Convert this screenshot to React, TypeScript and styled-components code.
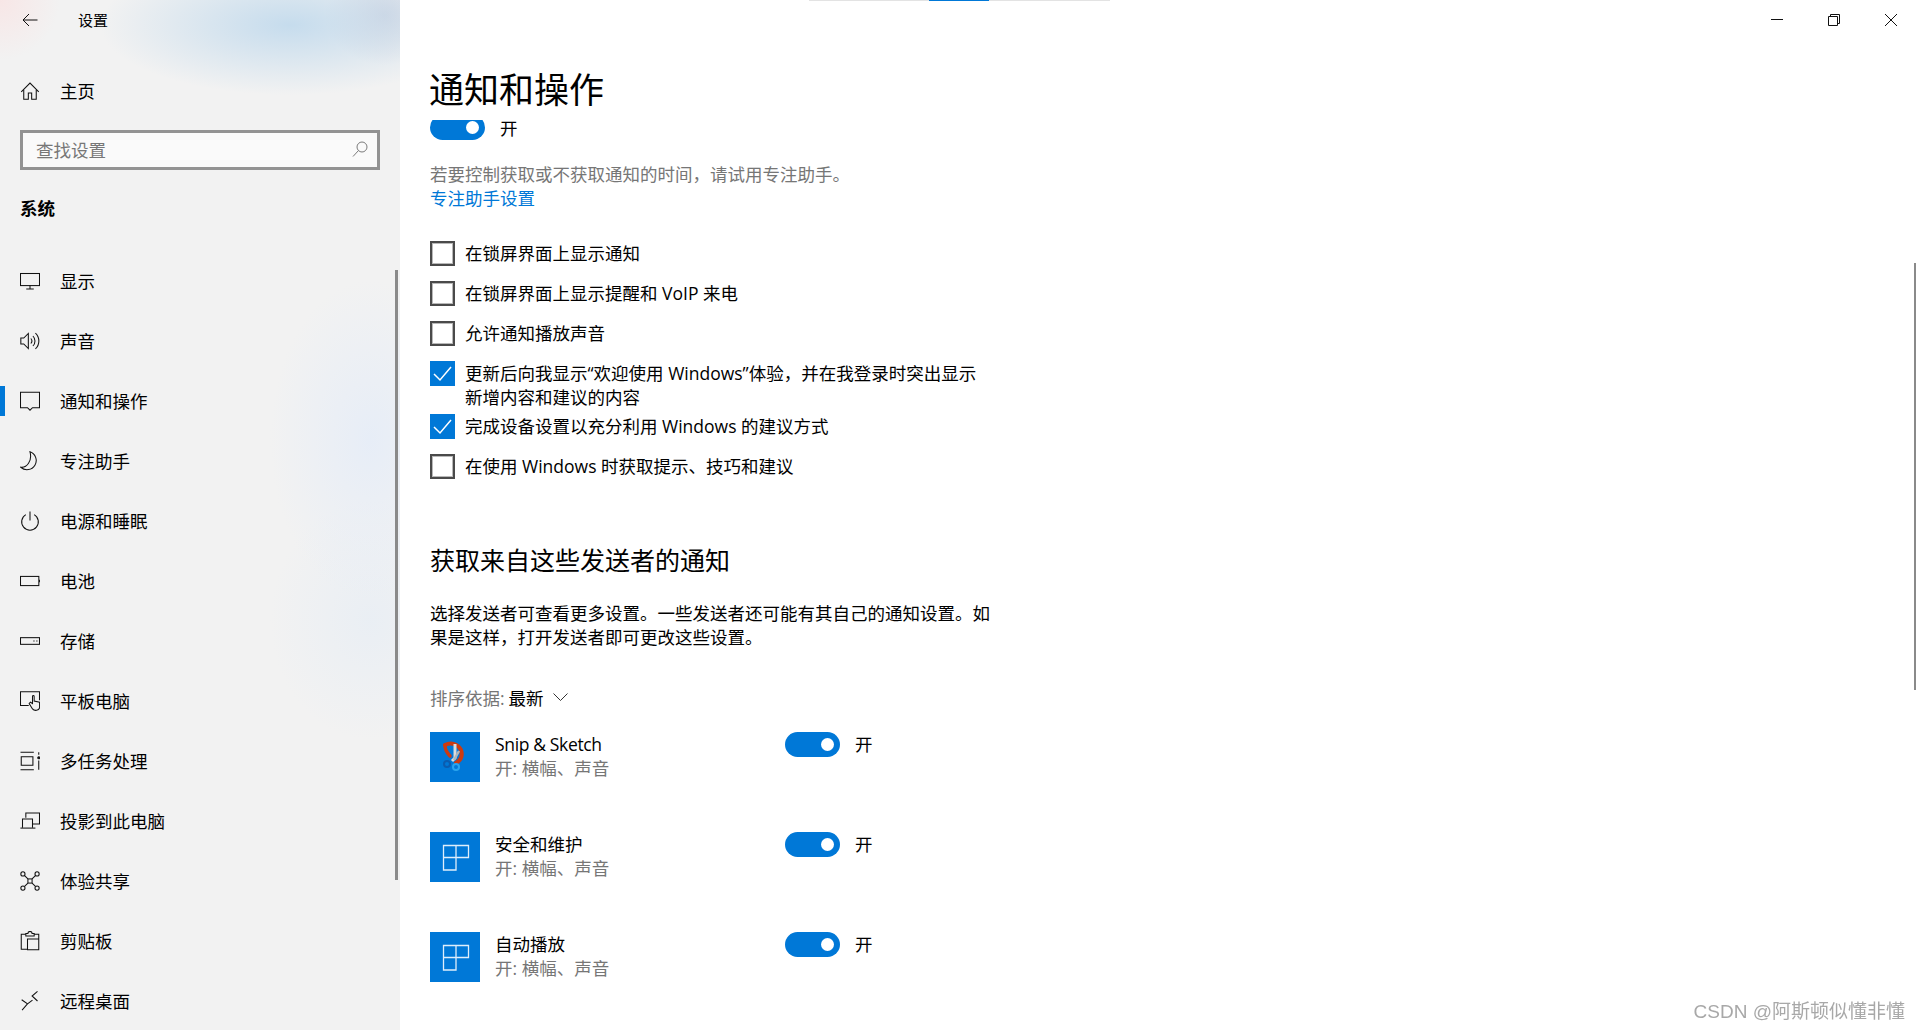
import styled, { createGlobalStyle } from 'styled-components'

const GlobalStyle = createGlobalStyle`
  html, body {
    margin: 0;
    padding: 0;
    background: #fff;
  }
  body {
    font-family: "Open Sans", "Noto Sans CJK SC", "Noto Sans", sans-serif;
    color: #000;
  }
`

const ICONS: Record<string, React.ReactNode> = {
  home: (
    <>
      <path d="M1.500 13 12 2.500 22.500 13" />
      <path d="M4.500 10.500V22h5.500v-7.500h4V22h5.500V10.500" />
    </>
  ),
  display: (
    <>
      <rect x="0.600" y="3" width="22.800" height="14.500" />
      <path d="M12 17.500v4M7.500 21.500h9" />
    </>
  ),
  sound: (
    <>
      <path d="M1 8.500h3.500L10 3v18l-5.500-5.500H1z" />
      <path d="M13 9a4.500 4.500 0 0 1 0 6M15.500 6a8.500 8.500 0 0 1 0 12M18.500 2.500a13 13 0 0 1 0 19" />
    </>
  ),
  notify: <path d="M0.600 1.500h22.800v18.500H15l-3 3-3-3H0.600z" />,
  moon: <path d="M12 1A11 11 0 1 1 1 19.500C8 20.500 15 12 12 1z" />,
  power: (
    <>
      <path d="M12 0.500v11" />
      <path d="M7 4.340A10 10 0 1 0 17 4.340" />
    </>
  ),
  battery: (
    <>
      <rect x="0.600" y="6.500" width="22" height="11" />
      <path d="M23.500 10.500v3" />
    </>
  ),
  storage: (
    <>
      <rect x="0.600" y="8" width="22.800" height="8" />
      <path d="M16 12h1.500M19.500 12h1.500" />
    </>
  ),
  tablet: (
    <>
      <path d="M10.500 17.500H0.600V1h22.800v10" />
      <path d="M15 6.500V15l-2.500-1.500L11 15l4 6.500c2 2.500 8 2.500 8.500-1.500v-6.500l-6.500-1.500V6.500c0-1.500-2-1.500-2 0z" />
    </>
  ),
  multitask: (
    <>
      <path d="M0.600 1.500h16M0.600 22.500h16" />
      <path d="M1.500 7h14v10h-14z" />
      <path d="M22.500 1.500v3M22.500 11.500v11" />
      <circle cx="22.500" cy="8" r="1.200" fill="#111" />
    </>
  ),
  project: (
    <>
      <path d="M7 8V2.500h16.400v13H15.500" />
      <path d="M3 20V9.500h12V20" />
      <path d="M0.500 20.500h18" />
    </>
  ),
  share: (
    <>
      <circle cx="3.500" cy="3.500" r="2.500" />
      <circle cx="20.500" cy="3.500" r="2.500" />
      <circle cx="3.500" cy="20.500" r="2.500" />
      <circle cx="20.500" cy="20.500" r="2.500" />
      <rect x="9.500" y="9.500" width="5" height="5" />
      <path d="m5.500 5.500 4 4M18.500 5.500l-4 4M5.500 18.500l4-4M18.500 18.500l-4-4" />
    </>
  ),
  clipboard: (
    <>
      <path d="M9 22H1.500V4H7" />
      <path d="M7 6V3h2.500a2.500 2.500 0 0 1 5 0H17v3z" />
      <path d="M17 4h5.500v18.500H9V9.500h13.500" />
    </>
  ),
  remote: (
    <>
      <path d="M2 10.500 9 15.500 2.500 23" />
      <path d="M9 15.500 15 11" />
      <path d="M21 0.500 14.500 6l6.500 6" />
    </>
  ),
}

const Icon = ({ name }: { name: string }) => (
  <NavSvg viewBox="0 0 24 24">{ICONS[name]}</NavSvg>
)

const NAV_ITEMS = [
  { icon: 'display', label: '显示' },
  { icon: 'sound', label: '声音' },
  { icon: 'notify', label: '通知和操作', active: true },
  { icon: 'moon', label: '专注助手' },
  { icon: 'power', label: '电源和睡眠' },
  { icon: 'battery', label: '电池' },
  { icon: 'storage', label: '存储' },
  { icon: 'tablet', label: '平板电脑' },
  { icon: 'multitask', label: '多任务处理' },
  { icon: 'project', label: '投影到此电脑' },
  { icon: 'share', label: '体验共享' },
  { icon: 'clipboard', label: '剪贴板' },
  { icon: 'remote', label: '远程桌面' },
]

const OPTIONS = [
  { label: '在锁屏界面上显示通知', checked: false },
  { label: '在锁屏界面上显示提醒和 VoIP 来电', checked: false },
  { label: '允许通知播放声音', checked: false },
  { label: '更新后向我显示“欢迎使用 Windows”体验，并在我登录时突出显示新增内容和建议的内容', checked: true, wrapped: true },
  { label: '完成设备设置以充分利用 Windows 的建议方式', checked: true },
  { label: '在使用 Windows 时获取提示、技巧和建议', checked: false },
]

const SENDERS = [
  { name: 'Snip & Sketch', snip: true },
  { name: '安全和维护' },
  { name: '自动播放' },
]

const SnipGlyph = () => (
  <svg width="50" height="50" viewBox="0 0 50 50" fill="none">
    <path d="M15 13c6-3 13-1 16 5 2 6 0 10-5 13" stroke="#cc3a10" strokeWidth="4" strokeLinecap="round" />
    <path d="M15 13c0 4 2 8 5 11" stroke="#cc3a10" strokeWidth="3.500" strokeLinecap="round" />
    <path d="M25 12v14l-3 3" stroke="#dcdcdc" strokeWidth="3" />
    <path d="M29 19l-5 9" stroke="#b5b5b5" strokeWidth="2.500" />
    <circle cx="17" cy="32" r="3" stroke="#0a5cb0" strokeWidth="2" />
    <circle cx="26" cy="35" r="3" stroke="#2aa5ee" strokeWidth="2" />
  </svg>
)

const TileGlyph = () => (
  <svg width="50" height="50" viewBox="0 0 50 50" fill="none" stroke="#dfeefb" strokeWidth="1.300">
    <path d="M13.500 13.500h25v12h-25zM26 13.500v12M13.500 25.500v12.500H26V25.500" />
  </svg>
)

const Toggle = ({ clipped }: { clipped?: boolean }) => (
  <ToggleClip $clipped={clipped}>
    <ToggleTrack $clipped={clipped}>
      <ToggleKnob />
    </ToggleTrack>
  </ToggleClip>
)

const App = () => {
  return (
    <Page>
      <GlobalStyle />
      <Sidebar>
        <SideTop>
          <svg width="16" height="14" viewBox="0 0 16 14" fill="none" stroke="#111" strokeWidth="1">
            <path d="M15.500 7H1M7 1 1 7l6 6" />
          </svg>
          <SideTopTitle>设置</SideTopTitle>
        </SideTop>
        <HomeRow>
          <Icon name="home" />
          <NavLabel>主页</NavLabel>
        </HomeRow>
        <SearchBox>
          <SearchText>查找设置</SearchText>
          <svg width="16" height="17" viewBox="0 0 16 17" fill="none" stroke="#7a7a7a" strokeWidth="1">
            <circle cx="10" cy="6" r="5" />
            <path d="M6.500 9.500 1 15.500" />
          </svg>
        </SearchBox>
        <SectionTitle>系统</SectionTitle>
        <NavList>
          {NAV_ITEMS.map((item) => (
            <NavRow key={item.label} $active={item.active}>
              <Icon name={item.icon} />
              <NavLabel>{item.label}</NavLabel>
            </NavRow>
          ))}
        </NavList>
        <SideScrollbar />
      </Sidebar>

      <Main>
        <Header>
          <TabStrip>
            <TabPart $width={120} />
            <TabPart $width={60} $active />
            <TabPart $width={121} />
          </TabStrip>
          <WindowControls>
            <WindowButton>
              <svg width="12" height="12" viewBox="0 0 12 12" fill="none" stroke="#111">
                <path d="M0 5.500h12" />
              </svg>
            </WindowButton>
            <WindowButton>
              <svg width="12" height="12" viewBox="0 0 12 12" fill="none" stroke="#111">
                <path d="M0.500 2.500h9v9h-9zM2.500 2.500v-2h9v9h-2" />
              </svg>
            </WindowButton>
            <WindowButton>
              <svg width="12" height="12" viewBox="0 0 12 12" fill="none" stroke="#111">
                <path d="m0 0 12 12M12 0 0 12" />
              </svg>
            </WindowButton>
          </WindowControls>
        </Header>

        <Content>
          <PageTitle>通知和操作</PageTitle>
          <ToggleRow>
            <Toggle clipped />
            <OnLabel>开</OnLabel>
          </ToggleRow>
          <Hint>若要控制获取或不获取通知的时间，请试用专注助手。</Hint>
          <FocusLink>专注助手设置</FocusLink>

          <OptionList>
            {OPTIONS.map((option) => (
              <OptionRow key={option.label} $wrapped={option.wrapped}>
                <CheckBox $checked={option.checked}>
                  {option.checked && (
                    <svg width="19" height="16" viewBox="0 0 19 16" fill="none" stroke="#fff" strokeWidth="1.500">
                      <path d="m1 8 6 6L18 1" />
                    </svg>
                  )}
                </CheckBox>
                <OptionText>{option.label}</OptionText>
              </OptionRow>
            ))}
          </OptionList>

          <SectionHeading>获取来自这些发送者的通知</SectionHeading>
          <Paragraph>选择发送者可查看更多设置。一些发送者还可能有其自己的通知设置。如果是这样，打开发送者即可更改这些设置。</Paragraph>

          <SortRow>
            <SortKey>排序依据:</SortKey>
            <span>最新</span>
            <svg width="15" height="8" viewBox="0 0 15 8" fill="none" stroke="#333" strokeWidth="1">
              <path d="m0.500 0.500 7 7 7-7" />
            </svg>
          </SortRow>

          {SENDERS.map((sender) => (
            <SenderRow key={sender.name}>
              <SenderTile>{sender.snip ? <SnipGlyph /> : <TileGlyph />}</SenderTile>
              <SenderText>
                <SenderName $latin={sender.snip}>{sender.name}</SenderName>
                <SenderSub>开: 横幅、声音</SenderSub>
              </SenderText>
              <Toggle />
              <OnLabel>开</OnLabel>
            </SenderRow>
          ))}
        </Content>
        <MainScrollbar />
        <Watermark>CSDN @阿斯顿似懂非懂</Watermark>
      </Main>
    </Page>
  )
}

export default App

const Page = styled.div`
  display: flex;
  width: 1920px;
  height: 1030px;
  overflow: hidden;
`

const Sidebar = styled.aside`
  position: relative;
  flex: 0 0 400px;
  display: flex;
  flex-direction: column;
  overflow: hidden;
  background:
    radial-gradient(ellipse 190px 70px at 290px 25px, rgba(190, 216, 236, 0.85), rgba(190, 216, 236, 0) 100%),
    radial-gradient(ellipse 60px 50px at 385px 15px, rgba(200, 205, 220, 0.7), rgba(200, 205, 220, 0) 100%),
    radial-gradient(ellipse 60px 60px at 0 0, rgba(250, 225, 225, 0.7), rgba(250, 225, 225, 0) 100%),
    radial-gradient(ellipse 100px 160px at 370px 440px, rgba(228, 236, 248, 0.8), rgba(228, 236, 248, 0) 100%),
    radial-gradient(ellipse 100px 120px at 370px 620px, rgba(228, 236, 245, 0.6), rgba(228, 236, 245, 0) 100%),
    #f2f2f2;
`

const SideTop = styled.div`
  display: flex;
  align-items: center;
  height: 40px;
  padding-left: 22px;
  flex-shrink: 0;
`

const SideTopTitle = styled.span`
  margin-left: 40px;
  font-size: 15px;
  line-height: 20px;
`

const NavSvg = styled.svg`
  width: 20px;
  height: 20px;
  flex-shrink: 0;
  fill: none;
  stroke: #111;
  stroke-width: 1.250;
`

const NavLabel = styled.span`
  margin-left: 20px;
  font-size: 17.500px;
  line-height: 24px;
  white-space: nowrap;
`

const HomeRow = styled.div`
  display: flex;
  align-items: center;
  height: 60px;
  margin-top: 21px;
  padding-left: 20px;
  flex-shrink: 0;
`

const SearchBox = styled.div`
  display: flex;
  align-items: center;
  justify-content: space-between;
  box-sizing: border-box;
  width: 360px;
  height: 40px;
  margin: 9px 0 0 20px;
  padding: 0 9px 2px 13px;
  border: 3px solid #939393;
  background: rgba(255, 255, 255, 0.6);
  flex-shrink: 0;
`

const SearchText = styled.span`
  font-size: 17.500px;
  color: #777;
`

const SectionTitle = styled.div`
  margin: 26px 0 31px 20px;
  font-size: 17.500px;
  line-height: 24px;
  font-weight: 700;
  flex-shrink: 0;
`

const NavList = styled.nav`
  display: flex;
  flex-direction: column;
`

const NavRow = styled.div<{ $active?: boolean }>`
  position: relative;
  display: flex;
  align-items: center;
  height: 60px;
  padding-left: 20px;
  flex-shrink: 0;

  &::before {
    content: '';
    display: ${(p) => (p.$active ? 'block' : 'none')};
    position: absolute;
    left: 0;
    top: 15px;
    width: 5px;
    height: 30px;
    background: #0078d7;
  }
`

const SideScrollbar = styled.div`
  position: absolute;
  left: 395px;
  top: 270px;
  width: 3px;
  height: 610px;
  background: #8a8a8a;
`

const Main = styled.main`
  position: relative;
  flex: 1;
  display: flex;
  flex-direction: column;
  background: #fff;
  overflow: hidden;
`

const Header = styled.header`
  display: flex;
  justify-content: space-between;
  height: 40px;
  flex-shrink: 0;
`

const TabStrip = styled.div`
  display: flex;
  margin-left: 409px;
  height: 1px;
`

const TabPart = styled.div<{ $width: number; $active?: boolean }>`
  width: ${(p) => p.$width}px;
  background: ${(p) => (p.$active ? '#0078d7' : '#e3e3e3')};
`

const WindowControls = styled.div`
  display: flex;
  margin-right: 1px;
`

const WindowButton = styled.div`
  display: flex;
  align-items: center;
  justify-content: center;
  width: 57px;
`

const Content = styled.div`
  display: flex;
  flex-direction: column;
  align-items: flex-start;
  padding-left: 30px;
`

const PageTitle = styled.h1`
  margin: 25px 0 0 -1px;
  font-size: 35px;
  line-height: 50px;
  font-weight: 400;
`

const ToggleRow = styled.div`
  display: flex;
  align-items: center;
  height: 20px;
  margin-top: 5px;

  span {
    margin-top: -3px;
  }
`

const ToggleClip = styled.div<{ $clipped?: boolean }>`
  height: ${(p) => (p.$clipped ? '20px' : '25px')};
  overflow: hidden;
`

const ToggleTrack = styled.div<{ $clipped?: boolean }>`
  display: flex;
  align-items: center;
  justify-content: flex-end;
  box-sizing: border-box;
  width: 55px;
  height: 25px;
  margin-top: ${(p) => (p.$clipped ? '-5px' : '0')};
  padding-right: 6px;
  border-radius: 13px;
  background: #0078d7;
`

const ToggleKnob = styled.div`
  width: 13px;
  height: 13px;
  border-radius: 50%;
  background: #fff;
`

const OnLabel = styled.span`
  margin-left: 15px;
  font-size: 17.500px;
  line-height: 25px;
`

const Hint = styled.div`
  margin-top: 22px;
  font-size: 17.500px;
  line-height: 24px;
  color: #767676;
`

const FocusLink = styled.a`
  font-size: 17.500px;
  line-height: 24px;
  color: #0078d7;
`

const OptionList = styled.div`
  display: flex;
  flex-direction: column;
  margin-top: 31px;
`

const OptionRow = styled.div<{ $wrapped?: boolean }>`
  display: flex;
  align-items: flex-start;
  margin-bottom: ${(p) => (p.$wrapped ? '5px' : '15px')};
`

const CheckBox = styled.div<{ $checked?: boolean }>`
  display: flex;
  align-items: center;
  justify-content: center;
  box-sizing: border-box;
  width: 25px;
  height: 25px;
  flex-shrink: 0;
  border: ${(p) => (p.$checked ? 'none' : '2px solid #4a4a4a')};
  background: ${(p) => (p.$checked ? '#0078d7' : 'transparent')};
  box-shadow: ${(p) => (p.$checked ? 'none' : 'inset 0 0 0 1px #b8b8b8')};
`

const OptionText = styled.div`
  width: 520px;
  margin-left: 10px;
  font-size: 17.500px;
  line-height: 24px;
`

const SectionHeading = styled.h2`
  margin: 49px 0 0;
  font-size: 25px;
  line-height: 34px;
  font-weight: 400;
`

const Paragraph = styled.p`
  width: 565px;
  margin: 24px 0 0;
  font-size: 17.500px;
  line-height: 24px;
`

const SortRow = styled.div`
  display: flex;
  align-items: center;
  height: 24px;
  margin: 36px 0 23px;
  gap: 4px;
  font-size: 17.500px;

  svg {
    margin-left: 5px;
  }
`

const SortKey = styled.span`
  color: #767676;
`

const SenderRow = styled.div`
  display: flex;
  align-items: flex-start;
  height: 100px;
`

const SenderTile = styled.div`
  width: 50px;
  height: 50px;
  flex-shrink: 0;
  background: #0078d7;
`

const SenderText = styled.div`
  display: flex;
  flex-direction: column;
  width: 275px;
  padding: 0 0 0 15px;
  margin-right: 15px;
`

const SenderName = styled.div<{ $latin?: boolean }>`
  font-size: 17.500px;
  line-height: 24px;
  letter-spacing: ${(p) => (p.$latin ? '-0.35px' : '0')};
`

const SenderSub = styled.div`
  font-size: 17.500px;
  line-height: 24px;
  color: #767676;
`

const MainScrollbar = styled.div`
  position: absolute;
  right: 4px;
  top: 263px;
  width: 2px;
  height: 427px;
  background: #8a8a8a;
`

const Watermark = styled.div`
  position: absolute;
  right: 15px;
  bottom: 5px;
  font-family: "Liberation Sans", "Noto Sans CJK SC", sans-serif;
  font-size: 19px;
  line-height: 26px;
  color: #a8a8a8;
  filter: blur(0.4px);
`
